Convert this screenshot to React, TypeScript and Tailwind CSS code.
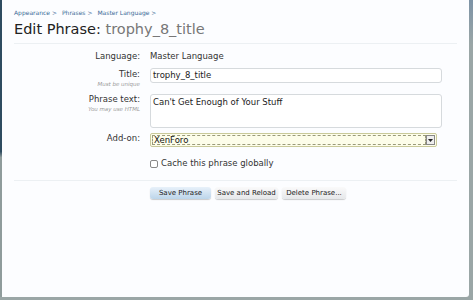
import React from 'react';

const font = { fontFamily: '"DejaVu Sans", Verdana, sans-serif' };

const Row: React.FC<{ label: string; hint?: string; children: React.ReactNode; className?: string }> = ({ label, hint, children, className }) => (
  <div className={`flex ${className ?? ''}`}>
    <div className="w-[148px] shrink-0 pr-[10px] text-right">
      <div className="text-[8.5px] leading-[11px] text-[#333]">{label}</div>
      {hint && <div className="mt-[1px] text-[5.5px] italic leading-[7px] text-[#999]">{hint}</div>}
    </div>
    <div className="flex-1">{children}</div>
  </div>
);

export default function App() {
  return (
    <div className="h-[300px] w-[473px] overflow-hidden bg-[#9aa6a6]" style={font}>
      <div className="flex h-[297px]">
        <div className="w-[2px] bg-[linear-gradient(#2f4c60_0,#2f4c60_51%,#8f9c9c_53%)]" />
        <div className="w-[467px] rounded-br-[3px] bg-[#fcfdff]">
          <div className="px-[12px] pt-[9px]">
            <div className="flex gap-[5px] text-[6px] leading-[8px] text-[#3a6a96]">
              <span>Appearance &gt;</span>
              <span>Phrases &gt;</span>
              <span>Master Language &gt;</span>
            </div>
            <h1 className="mt-[2px] text-[14.5px] leading-[20px] text-[#222]">
              Edit Phrase: <span className="text-[#777]">trophy_8_title</span>
            </h1>
            <div className="mt-[4px] h-[1px] bg-[#ecf0f3]" />
          </div>

          <div className="mt-[7px] pr-[27px]">
            <Row label="Language:">
              <div className="text-[8.5px] leading-[11px] text-[#333]">Master Language</div>
            </Row>
            <Row label="Title:" hint="Must be unique" className="mt-[7px]">
              <div className="mt-[-1px] flex h-[15px] items-center rounded-[3px] border border-[#d6dadd] bg-white px-[2px] text-[8.5px] text-[#222]">
                trophy_8_title
              </div>
            </Row>
            <Row label="Phrase text:" hint="You may use HTML" className="mt-[6px]">
              <div className="h-[34px] rounded-[3px] border border-[#d6dadd] bg-white px-[2px] pt-[2px] text-[8.5px] leading-[11px] text-[#222]">
                Can't Get Enough of Your Stuff
              </div>
            </Row>
            <Row label="Add-on:" className="mt-[5px]">
              <div className="mr-[5px] flex h-[14px] items-center rounded-[2px] border border-[#c9c99a] bg-[#fdfdea] p-[1px]">
                <div className="flex h-full flex-1 items-center border border-dashed border-[#9a9a7a] px-[1px] text-[8.5px] text-[#111]">
                  XenForo
                </div>
                <div className="flex h-[10px] w-[9px] items-center justify-center border border-[#888] bg-[#eee]">
                  <svg width="5" height="3" viewBox="0 0 5 3"><path d="M0 0h5L2.5 3z" fill="#222" /></svg>
                </div>
              </div>
            </Row>
            <Row label="" className="mt-[11px]">
              <label className="flex items-center gap-[3px] text-[8.5px] leading-[11px] text-[#333]">
                <span className="h-[8px] w-[8px] rounded-[2px] border border-[#888] bg-white" />
                Cache this phrase globally
              </label>
            </Row>
          </div>

          <div className="mx-[12px] mt-[11px] h-[1px] bg-[#ecf0f3]" />

          <div className="ml-[148px] mt-[6px] flex gap-[4px] text-[7px] text-[#222]">
            <button className="h-[12px] w-[61px] rounded-[3px] bg-[linear-gradient(#e8f1fa,#bcd5ea)] shadow-[0_1px_1px_rgba(0,0,0,0.2)]">Save Phrase</button>
            <button className="h-[12px] w-[63px] rounded-[3px] bg-[linear-gradient(#fafafa,#e6e8ea)] shadow-[0_1px_1px_rgba(0,0,0,0.2)]">Save and Reload</button>
            <button className="h-[12px] w-[64px] rounded-[3px] bg-[linear-gradient(#fafafa,#e6e8ea)] shadow-[0_1px_1px_rgba(0,0,0,0.2)]">Delete Phrase...</button>
          </div>
        </div>
        <div className="w-[4px] bg-[linear-gradient(#7d93a6_0,#9aa6a6_15%)]" />
      </div>
    </div>
  );
}
